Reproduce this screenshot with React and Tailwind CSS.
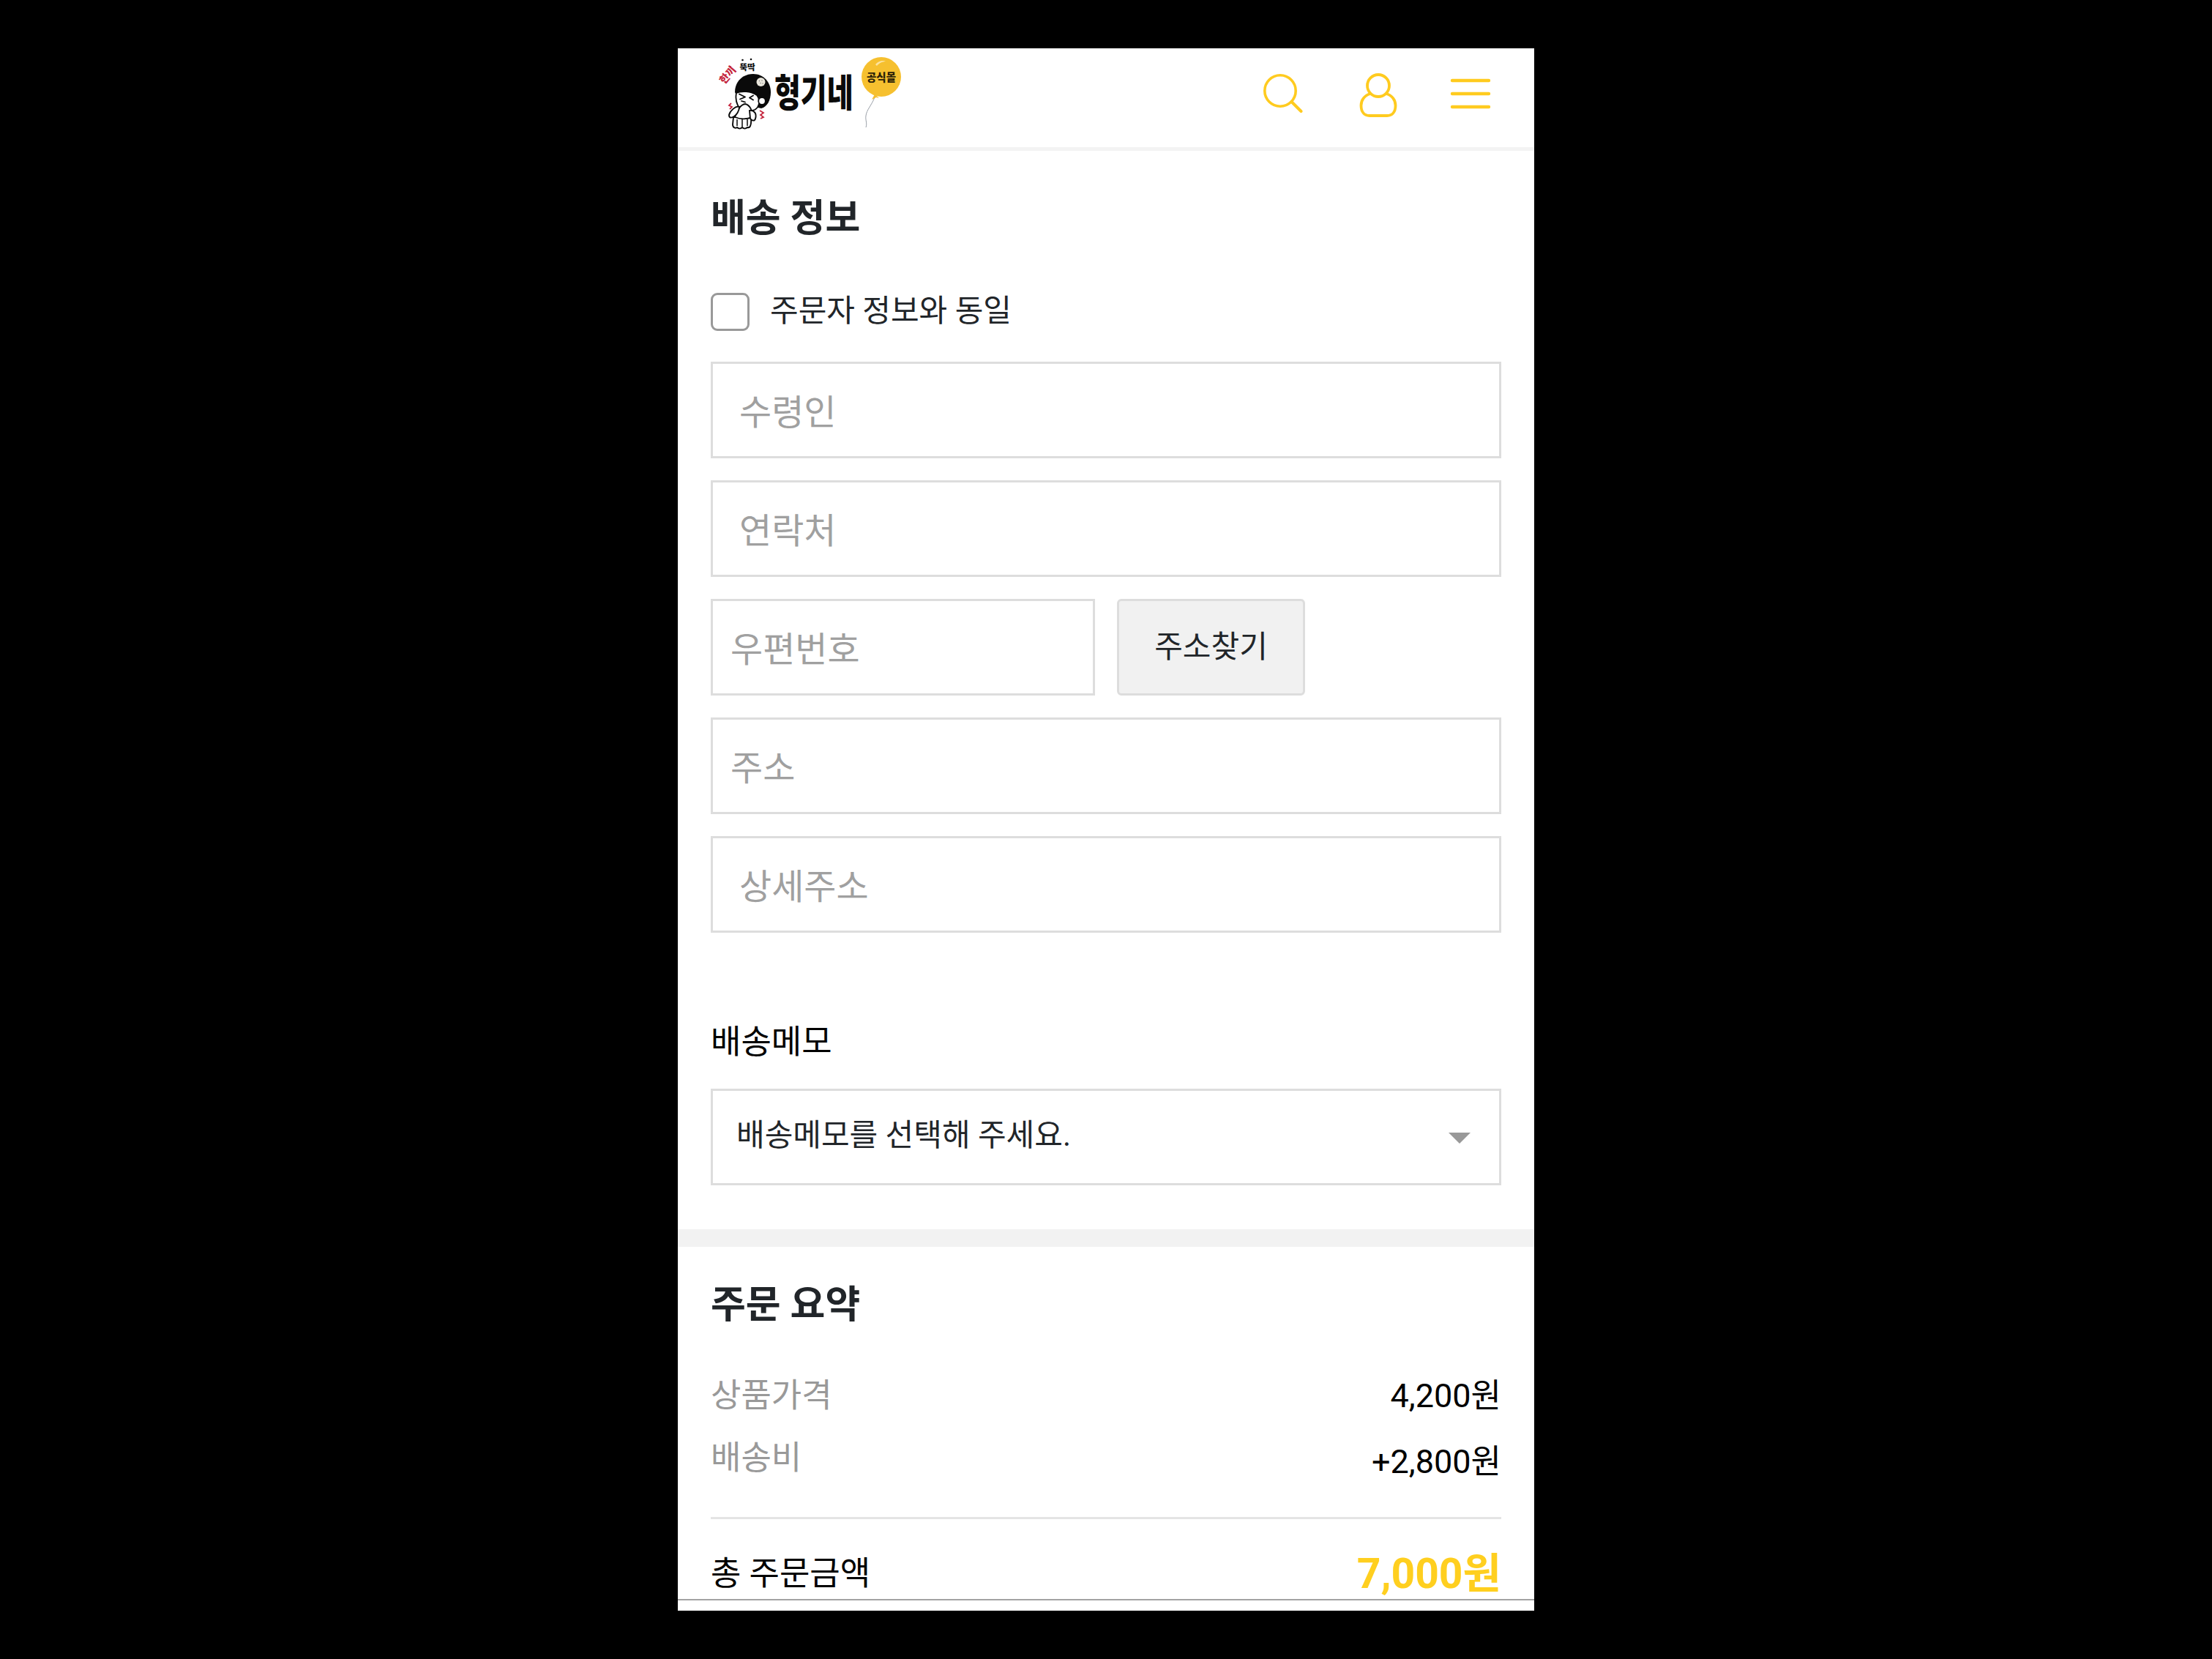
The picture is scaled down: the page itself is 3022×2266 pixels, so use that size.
const font = { fontFamily: '"Roboto", "Noto Sans CJK KR", sans-serif' };

function Logo() {
  return (
    <svg viewBox="960 70 280 120" className="h-[120px] w-[280px]" aria-label="형기네 공식몰">
      {/* small captions */}
      <text x="995" y="107" fontSize="14" fontWeight="900" fill="#c4243c" textAnchor="middle" transform="rotate(-50 995 103)" fontFamily='"Noto Sans CJK KR"'>한끼</text>
      <text x="1021" y="96" fontSize="11.5" fontWeight="900" fill="#111" textAnchor="middle" fontFamily='"Noto Sans CJK KR"'>뚝딱</text>
      <circle cx="1014.5" cy="82" r="1.3" fill="#111" />
      <circle cx="1026" cy="81" r="1.3" fill="#111" />
      <circle cx="998" cy="91" r="1" fill="#c4243c" />
      {/* hair */}
      <path d="M1004 126 C1004 111 1015 101 1029 101 C1043 101 1053 112 1053 126 C1053 137 1048 146 1040 148 L1012 142 Z" fill="#0a0a0a" />
      <circle cx="1039.5" cy="112" r="6" fill="#e9e6dc" />
      <circle cx="1037.5" cy="110.5" r=".7" fill="#777" /><circle cx="1041" cy="110" r=".7" fill="#777" /><circle cx="1039" cy="113.5" r=".7" fill="#777" /><circle cx="1042" cy="114" r=".7" fill="#777" />
      {/* face */}
      <path d="M1006 127 C1012 124 1026 124 1034 130 C1039 136 1038 146 1031 150 C1022 153 1012 151 1008 144 C1005 138 1005 132 1006 127 Z" fill="#fff" stroke="#0a0a0a" strokeWidth="1.8" />
      <circle cx="1041" cy="138" r="4.8" fill="#fff" stroke="#0a0a0a" strokeWidth="1.8" />
      <path d="M1010 128.5 L1018 132.5 L1011 135.5 M1013 138 L1018 139.5 M1029 130.5 L1024 133.5 L1029 136.5" fill="none" stroke="#0a0a0a" strokeWidth="1.8" strokeLinecap="round" strokeLinejoin="round" />
      {/* body, rice ball, hands */}
      <path d="M1002 160 L1001 170 C1001 175 1005 175.5 1007 174 C1009 176 1012 176 1014 174 C1016 176 1019 176 1021 174 C1024 175 1027 173 1026 160 Z" fill="#fff" stroke="#0a0a0a" strokeWidth="1.9" />
      <path d="M1007 163 V172 M1014 163 V173 M1021 163 V172" stroke="#0a0a0a" strokeWidth="1.5" />
      <path d="M1004 160 C1007 151 1011 143 1018 142 C1024 143 1028 150 1028 160 C1020 163 1011 163 1004 160 Z" fill="#fff" stroke="#0a0a0a" strokeWidth="1.9" />
      <path d="M1010 146 C1005 144 997 152 996 157 C996 162 1000 161 1003 159 C1006 157 1010 152 1010 146 Z" fill="#fff" stroke="#0a0a0a" strokeWidth="1.9" />
      <path d="M1024 151 C1031 150 1034 156 1032 162 C1031 166 1027 165 1025 162 Z" fill="#fff" stroke="#0a0a0a" strokeWidth="1.9" />
      {/* red marks */}
      <path d="M999 141 L996 144 L1000 146 L997 149" fill="none" stroke="#c4243c" strokeWidth="1.8" />
      <path d="M1038 151 L1043 154 L1039 157 L1043 160 L1039 162" fill="none" stroke="#c4243c" strokeWidth="1.8" />
      {/* wordmark */}
      <text transform="translate(1058 146) scale(1 1.34)" fontSize="39" fontWeight="900" fill="#0a0a0a" fontFamily='"Noto Sans CJK KR"'>형기네</text>
      {/* balloon */}
      <path d="M1195 133 C1190 145 1184 150 1183 158 C1182 164 1185 168 1183 174" fill="none" stroke="#9aa0a8" strokeWidth="1" />
      <path d="M1195 129 L1191 136 L1197 133 L1201 134 Z" fill="#f4bd30" />
      <circle cx="1204" cy="105" r="27" fill="#f6c02f" />
      <path d="M1196 88 C1200 83 1207 82 1210 84 C1206 84 1201 86 1198 90 Z" fill="#fbe3a0" />
      <text x="1204" y="111" fontSize="14.5" fontWeight="900" fill="#2c2208" textAnchor="middle" fontFamily='"Noto Sans CJK KR"'>공식몰</text>
    </svg>
  );
}

function TextInput({ placeholder, pad = 'px-[36px]', width = 'w-full' }) {
  return (
    <input
      readOnly
      placeholder={placeholder}
      className={`h-[132px] ${width} ${pad} border-[3px] border-[#dddddd] bg-white pt-[6px] text-[48px] outline-none placeholder:text-[#a0a0a0]`}
    />
  );
}

export default function App() {
  return (
    <div className="flex min-h-[2266px] justify-center bg-black pt-[66px]" style={font}>
      <div className="flex h-[2134px] w-[1170px] flex-col overflow-hidden bg-white text-black">
        <header className="flex h-[140px] shrink-0 justify-between border-b-[5px] border-[#f3f3f3] pr-[58px] pl-[34px]">
          <div className="mt-[4px]"><Logo /></div>
          <div className="mt-[34px] flex h-[60px] gap-[68px] text-[#ffcb1f]">
            <svg viewBox="0 0 64 60" className="h-[60px] w-[64px]" fill="none" stroke="currentColor" strokeWidth="3.6" strokeLinecap="round">
              <circle cx="29" cy="24" r="21.2" />
              <path d="M44.5 39 L57.5 52" strokeWidth="4" />
            </svg>
            <svg viewBox="0 0 60 60" className="h-[60px] w-[60px]" fill="none" stroke="currentColor" strokeWidth="3.8">
              <circle cx="31" cy="17" r="15" />
              <path d="M20.5 28 C12 30 7.5 37 7.5 44 C7.5 53 12 58 19 58 L43 58 C50 58 54.5 53 54.5 44 C54.5 37 50 30 41.5 28" />
            </svg>
            <svg viewBox="0 0 58 60" className="h-[60px] w-[58px]" fill="none" stroke="currentColor" strokeWidth="4.4" strokeLinecap="round">
              <path d="M4 10 H54 M4 28 H54 M4 46 H54" />
            </svg>
          </div>
        </header>

        <section className="px-[45px] pt-[54px] pb-[60px]">
          <h2 className="h-[78px] text-[52px] leading-[78px] font-bold text-[#212529]">배송 정보</h2>
          <label className="mt-[62px] flex h-[52px] items-center gap-[28px] text-[42px] text-[#212529]">
            <span className="h-[52px] w-[53px] rounded-[9px] border-[3px] border-[#999999] bg-white" />
            <span className="-mt-[4px]">주문자 정보와 동일</span>
          </label>
          <div className="mt-[42px] flex flex-col gap-[30px]">
            <TextInput placeholder="수령인" />
            <TextInput placeholder="연락처" />
            <div className="flex gap-[30px]">
              <TextInput placeholder="우편번호" pad="px-[24px]" width="w-[525px]" />
              <button className="h-[132px] w-[257px] rounded-[6px] border-[3px] border-[#dddddd] bg-[#f1f1f1] pb-[2px] text-[42px] text-[#212529]">주소찾기</button>
            </div>
            <TextInput placeholder="주소" pad="px-[24px]" />
            <TextInput placeholder="상세주소" />
          </div>
          <div className="mt-[120px] h-[60px] text-[45px] leading-[60px]">배송메모</div>
          <div className="relative mt-[33px]">
            <select className="h-[132px] w-full appearance-none border-[3px] border-[#dddddd] bg-white pb-[6px] pl-[32px] text-[42px] text-[#212529] outline-none">
              <option>배송메모를 선택해 주세요.</option>
            </select>
            <svg viewBox="0 0 30 15" className="pointer-events-none absolute top-[60px] right-[42px] h-[15px] w-[30px]">
              <path d="M0 0 H30 L15 15 Z" fill="#999999" />
            </svg>
          </div>
        </section>

        <div className="h-[24px] shrink-0 bg-[#f2f2f2]" />

        <section className="px-[45px] pt-[41px]">
          <h2 className="h-[78px] text-[52px] leading-[78px] font-bold text-[#212529]">주문 요약</h2>
          <div className="mt-[55px] flex items-start justify-between text-[45px]">
            <span className="h-[60px] leading-[60px] text-[#999999]">상품가격</span>
            <span className="h-[60px] leading-[60px]">4,200원</span>
          </div>
          <div className="mt-[30px] flex items-start justify-between text-[45px]">
            <span className="h-[50px] leading-[50px] text-[#999999]">배송비</span>
            <span className="h-[60px] leading-[60px]">+2,800원</span>
          </div>
          <div className="mt-[45px] h-[3px] bg-[#e4e4e4]" />
          <div className="mt-[45px] flex h-[60px] items-center justify-between">
            <span className="text-[45px]">총 주문금액</span>
            <span className="text-[57px] font-bold text-[#ffcf1f]">7,000원</span>
          </div>
        </section>
        <div className="mt-[4px] h-[2px] shrink-0 bg-[#a3a3a3]" />
      </div>
    </div>
  );
}
